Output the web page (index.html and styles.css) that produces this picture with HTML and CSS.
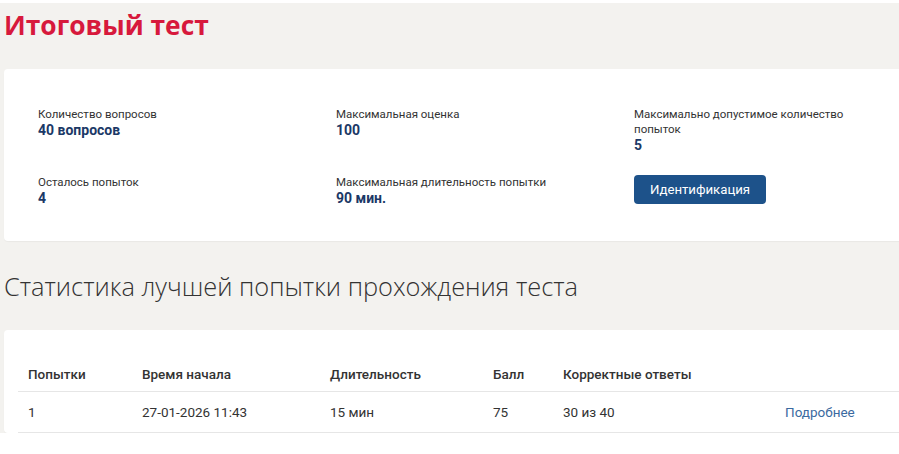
FILE: index.html
```html
<!DOCTYPE html>
<html lang="ru">
<head>
    <meta charset="UTF-8">
    <meta name="viewport" content="width=device-width, initial-scale=1.0">
    <title>Итоговый тест</title>
    <link rel="stylesheet" href="styles.css">
</head>
<body>

<div class="page">
    <h1 class="test-title">Итоговый тест</h1>

    <div class="card info-card">
        <div class="info-grid">
            <div class="info-item">
                <div class="info-label">Количество вопросов</div>
                <div class="info-value">40 вопросов</div>
            </div>
            <div class="info-item">
                <div class="info-label">Максимальная оценка</div>
                <div class="info-value">100</div>
            </div>
            <div class="info-item">
                <div class="info-label">Максимально допустимое количество попыток</div>
                <div class="info-value">5</div>
            </div>
            <div class="info-item">
                <div class="info-label">Осталось попыток</div>
                <div class="info-value">4</div>
            </div>
            <div class="info-item">
                <div class="info-label">Максимальная длительность попытки</div>
                <div class="info-value">90 мин.</div>
            </div>
            <div class="info-item">
                <button class="btn-primary">Идентификация</button>
            </div>
        </div>
    </div>

    <h2 class="section-title">Статистика лучшей попытки прохождения теста</h2>

    <div class="card stats-card">
        <table class="stats-table">
            <thead>
                <tr>
                    <th class="col-attempt">Попытки</th>
                    <th class="col-start">Время начала</th>
                    <th class="col-duration">Длительность</th>
                    <th class="col-score">Балл</th>
                    <th class="col-correct">Корректные ответы</th>
                    <th></th>
                </tr>
            </thead>
            <tbody>
                <tr>
                    <td>1</td>
                    <td>27-01-2026 11:43</td>
                    <td>15 мин</td>
                    <td>75</td>
                    <td>30 из 40</td>
                    <td><a href="#" class="details-link">Подробнее</a></td>
                </tr>
            </tbody>
        </table>
    </div>
</div>

</body>
</html>
```

FILE: styles.css
```css
body {
    font-family: Roboto, "Open Sans", Arial, sans-serif;
    background-color: #fff;
    color: #333;
    margin: 0;
    padding: 0;
}
.page {
    background-color: #f3f2ef;
    margin-top: 3px;
    padding-left: 4px;
    overflow: hidden;
}
.test-title {
    margin: 0;
    padding-top: 3px;
    font-family: "Open Sans", Arial, sans-serif;
    font-size: 26.4px;
    line-height: 38px;
    font-weight: 700;
    color: #d7193c;
}
.card {
    background-color: #fff;
    border-radius: 4px;
    margin-right: -10px;
    box-shadow: 0 1px 1px rgba(0,0,0,0.04);
}
.info-card {
    margin-top: 25px;
    padding: 38px 0 34px 34px;
}
.info-grid {
    display: grid;
    grid-template-columns: 298px 298px 240px;
    row-gap: 21px;
}
.info-label {
    font-size: 11.5px;
    line-height: 15px;
    color: #333;
}
.info-value {
    font-size: 14px;
    line-height: 17px;
    font-weight: 700;
    color: #1b3866;
}
.btn-primary {
    font-family: inherit;
    width: 132px;
    height: 29px;
    padding: 0;
    border: none;
    border-radius: 4px;
    background-color: #1d528a;
    color: #fff;
    font-size: 13.2px;
    cursor: pointer;
}
.section-title {
    margin: 0;
    padding: 30px 0 29px;
    font-family: "Open Sans", Arial, sans-serif;
    font-size: 25.4px;
    line-height: 30px;
    font-weight: 300;
    color: #333;
}
.stats-card {
    padding: 34px 0 0 14px;
}
.stats-table {
    border-collapse: collapse;
    table-layout: fixed;
    width: 100%;
    font-size: 13.5px;
    line-height: 20px;
}
.stats-table th,
.stats-table td {
    text-align: left;
    padding: 0 10px;
    border-bottom: 1px solid #e6e6e6;
}
.stats-table th {
    padding-bottom: 7px;
    font-weight: 500;
    color: #333;
}
.stats-table td {
    padding-top: 10px;
    padding-bottom: 10px;
}
.col-attempt { width: 94px; }
.col-start { width: 168px; }
.col-duration { width: 143px; }
.col-score { width: 50px; }
.col-correct { width: 202px; }
.details-link {
    color: #3b6aa0;
    text-decoration: none;
}
```
